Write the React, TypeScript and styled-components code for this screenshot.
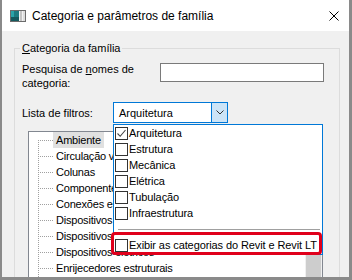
import styled, { createGlobalStyle } from "styled-components";

const GlobalStyle = createGlobalStyle`
  html, body {
    margin: 0;
    padding: 0;
    background: #ffffff;
  }
  body {
    font-family: "Liberation Sans", Arial, sans-serif;
    font-size: 11px;
    color: #000000;
  }
`;

const popupOptions = [
  { label: "Arquitetura", checked: true },
  { label: "Estrutura", checked: false },
  { label: "Mecânica", checked: false },
  { label: "Elétrica", checked: false },
  { label: "Tubulação", checked: false },
  { label: "Infraestrutura", checked: false },
];

const treeItems = [
  "Ambiente",
  "Circulação vertical",
  "Colunas",
  "Componentes estruturais",
  "Conexões estruturais",
  "Dispositivos de comunicação",
  "Dispositivos de dados",
  "Dispositivos elétricos",
  "Enrijecedores estruturais",
  "Equipamento elétrico",
];

function AppIcon() {
  return (
    <svg width="16" height="12" viewBox="0 0 16 12">
      <rect x="0.5" y="0.5" width="15" height="11" fill="#f2f2f2" stroke="#6b6b6b" />
      <rect x="1" y="1" width="8" height="10" fill="#1d7b80" />
      <rect x="1" y="1" width="3" height="10" fill="#2aa3a8" />
      <rect x="1" y="7" width="8" height="4" fill="#155a5e" />
      <rect x="10" y="1" width="2" height="10" fill="#c4c4c4" />
      <rect x="13" y="1" width="2" height="10" fill="#dedede" />
    </svg>
  );
}

function CloseIcon() {
  return (
    <svg width="10" height="10" viewBox="0 0 10 10">
      <path d="M0.5 0.5 L9.5 9.5 M9.5 0.5 L0.5 9.5" stroke="#000" strokeWidth="1" fill="none" />
    </svg>
  );
}

function Chevron() {
  return (
    <svg width="8" height="5" viewBox="0 0 8 5">
      <path d="M0.5 0.5 L4 4 L7.5 0.5" stroke="#333" strokeWidth="1" fill="none" />
    </svg>
  );
}

function CheckMark() {
  return (
    <svg width="11" height="11" viewBox="0 0 11 11">
      <path d="M1.5 5.5 L4.2 8.3 L9.5 2" stroke="#444" strokeWidth="1.1" fill="none" />
    </svg>
  );
}

export default function App() {
  return (
    <>
      <GlobalStyle />
      <Window>
        <TitleBar>
          <AppIcon />
          <Title>Categoria e parâmetros de família</Title>
          <CloseButton>
            <CloseIcon />
          </CloseButton>
        </TitleBar>
        <Body>
          <Group>
            <Legend>
              <u>C</u>ategoria da família
            </Legend>
            <SearchRow>
              <FieldLabel $width={138}>
                Pesquisa de <u>n</u>omes de
                <br />
                categoria:
              </FieldLabel>
              <TextInput />
            </SearchRow>
            <FilterRow>
              <FieldLabel $width={91}>Lista de filtros:</FieldLabel>
              <Combo>
                <ComboValue>Arquitetura</ComboValue>
                <ComboButton>
                  <Chevron />
                </ComboButton>
                <Popup>
                  {popupOptions.map((o) => (
                    <OptionRow key={o.label}>
                      <CheckBox>{o.checked && <CheckMark />}</CheckBox>
                      {o.label}
                    </OptionRow>
                  ))}
                  <Separator />
                  <OptionRow>
                    <CheckBox />
                    Exibir as categorias do Revit e Revit LT
                  </OptionRow>
                  <Highlight />
                </Popup>
              </Combo>
            </FilterRow>
            <Tree>
              <TreeList>
                {treeItems.map((item, i) => (
                  <TreeRow key={item}>
                    <Branch $first={i === 0} />
                    <TreeLabel $selected={i === 0}>{item}</TreeLabel>
                  </TreeRow>
                ))}
              </TreeList>
              <ScrollBar>
                <Thumb />
              </ScrollBar>
            </Tree>
          </Group>
        </Body>
      </Window>
    </>
  );
}

const Window = styled.div`
  width: 352px;
  height: 280px;
  box-sizing: border-box;
  border-left: 2px solid #8a8a8a;
  border-right: 3px solid #8a8a8a;
  border-bottom: 3px solid #8a8a8a;
  background: #f0f0f0;
  display: flex;
  flex-direction: column;
  overflow: hidden;
`;

const TitleBar = styled.div`
  height: 31px;
  flex: none;
  background: #ffffff;
  display: flex;
  align-items: center;
  padding: 0 10px 0 8px;
`;

const Title = styled.div`
  margin-left: 6px;
  font-size: 12px;
  line-height: 16px;
  white-space: nowrap;
`;

const CloseButton = styled.div`
  margin-left: auto;
  width: 10px;
  height: 10px;
  display: flex;
`;

const Body = styled.div`
  flex: 1;
  min-height: 0;
  overflow: hidden;
  padding: 10px 9px 0 12px;
`;

const Group = styled.fieldset`
  margin: 0;
  min-width: 0;
  border: 1px solid #dcdcdc;
  padding: 7px 0 0 7px;
  height: 260px;
`;

const Legend = styled.legend`
  margin-left: -2px;
  padding: 0 2px;
  line-height: 14px;
  font-size: 11px;
`;

const SearchRow = styled.div`
  display: flex;
  align-items: flex-start;
`;

const FieldLabel = styled.div<{ $width: number }>`
  width: ${(p) => p.$width}px;
  flex: none;
  line-height: 14px;
  white-space: nowrap;
`;

const TextInput = styled.div`
  margin-top: 1px;
  width: 164px;
  height: 19px;
  box-sizing: border-box;
  border: 1px solid #7a7a7a;
  background: #ffffff;
`;

const FilterRow = styled.div`
  display: flex;
  align-items: center;
  margin-top: 12px;
`;

const Combo = styled.div`
  position: relative;
  width: 115px;
  height: 21px;
  box-sizing: border-box;
  border: 1px solid #0078d7;
  background: #ffffff;
  display: flex;
  align-items: center;
`;

const ComboValue = styled.div`
  padding-left: 5px;
  flex: 1;
  line-height: 16px;
`;

const ComboButton = styled.div`
  width: 16px;
  height: 100%;
  box-sizing: border-box;
  border-left: 1px solid #0078d7;
  background: #cce4f7;
  display: flex;
  align-items: center;
  justify-content: center;
`;

const Popup = styled.div`
  position: absolute;
  top: 21px;
  left: -1px;
  width: 210px;
  height: 131px;
  box-sizing: border-box;
  border: 1px solid #0078d7;
  background: #ffffff;
  z-index: 2;
`;

const OptionRow = styled.div`
  height: 16px;
  display: flex;
  align-items: center;
  padding-left: 1px;
  white-space: nowrap;
  line-height: 16px;
  letter-spacing: -0.1px;
`;

const CheckBox = styled.span`
  width: 13px;
  height: 13px;
  box-sizing: border-box;
  border: 1px solid #333333;
  background: #ffffff;
  margin-right: 1px;
  flex: none;
  display: flex;
  align-items: center;
  justify-content: center;
`;

const Separator = styled.div`
  height: 1px;
  background: #a0a0a0;
  margin: 8px 2px 7px 4px;
`;

const Highlight = styled.div`
  position: absolute;
  left: -3px;
  top: 107px;
  width: 211px;
  height: 23px;
  box-sizing: border-box;
  border: 3px solid #e0001b;
  border-radius: 4px;
  pointer-events: none;
`;

const Tree = styled.div`
  margin: 8px 0 0 6px;
  width: 295px;
  height: 160px;
  box-sizing: border-box;
  border: 1px solid #828790;
  background: #ffffff;
  display: flex;
`;

const TreeList = styled.div`
  flex: 1;
  min-width: 0;
  overflow: hidden;
`;

const TreeRow = styled.div`
  height: 16px;
  display: flex;
  align-items: center;
  white-space: nowrap;
`;

const Branch = styled.span<{ $first?: boolean }>`
  flex: none;
  width: 15px;
  height: 16px;
  margin-left: 9px;
  box-sizing: border-box;
  padding-top: ${(p) => (p.$first ? "8px" : "0")};
  background-image: linear-gradient(to right, #a0a0a0 50%, transparent 50%),
    linear-gradient(to bottom, #a0a0a0 50%, transparent 50%);
  background-size: 2px 1px, 1px 2px;
  background-repeat: repeat-x, repeat-y;
  background-position: 0 8px, 0 0;
  background-origin: border-box;
  background-clip: content-box;
`;

const TreeLabel = styled.span<{ $selected?: boolean }>`
  padding: 0 3px;
  line-height: 16px;
  letter-spacing: -0.2px;
  background: ${(p) => (p.$selected ? "#e0e0e0" : "transparent")};
`;

const ScrollBar = styled.div`
  width: 17px;
  flex: none;
  background: #f0f0f0;
  padding-top: 120px;
  box-sizing: border-box;
`;

const Thumb = styled.div`
  margin-left: 1px;
  width: 15px;
  height: 100px;
  background: #cdcdcd;
`;
